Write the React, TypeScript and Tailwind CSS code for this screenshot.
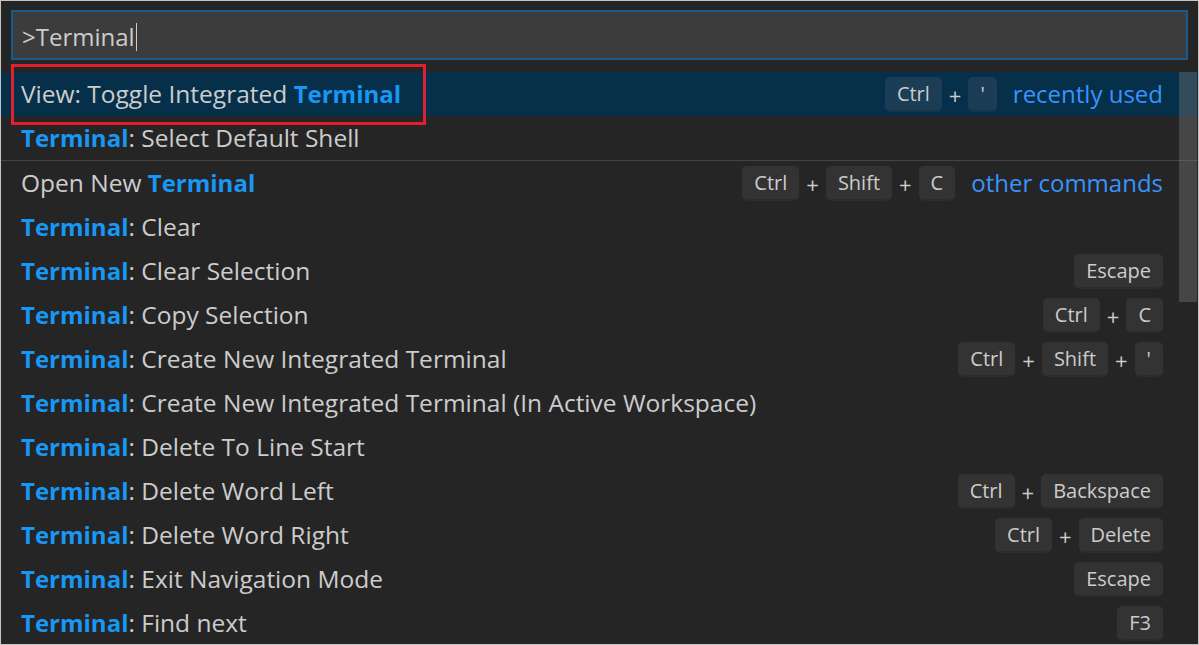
import React from "react";

type Row = {
  pre?: string;
  hl: string;
  post?: string;
  keys?: string[];
  label?: string;
  selected?: boolean;
  sep?: boolean;
};

const rows: Row[] = [
  { pre: "View: Toggle Integrated ", hl: "Terminal", keys: ["Ctrl", "'"], label: "recently used", selected: true },
  { hl: "Terminal", post: ": Select Default Shell" },
  { pre: "Open New ", hl: "Terminal", keys: ["Ctrl", "Shift", "C"], label: "other commands", sep: true },
  { hl: "Terminal", post: ": Clear" },
  { hl: "Terminal", post: ": Clear Selection", keys: ["Escape"] },
  { hl: "Terminal", post: ": Copy Selection", keys: ["Ctrl", "C"] },
  { hl: "Terminal", post: ": Create New Integrated Terminal", keys: ["Ctrl", "Shift", "'"] },
  { hl: "Terminal", post: ": Create New Integrated Terminal (In Active Workspace)" },
  { hl: "Terminal", post: ": Delete To Line Start" },
  { hl: "Terminal", post: ": Delete Word Left", keys: ["Ctrl", "Backspace"] },
  { hl: "Terminal", post: ": Delete Word Right", keys: ["Ctrl", "Delete"] },
  { hl: "Terminal", post: ": Exit Navigation Mode", keys: ["Escape"] },
  { hl: "Terminal", post: ": Find next", keys: ["F3"] },
];

function Keys({ keys, selected }: { keys: string[]; selected?: boolean }) {
  return (
    <div className="flex items-center">
      {keys.map((k, i) => (
        <React.Fragment key={i}>
          {i > 0 && <span className="mx-[7px] pt-[2px] text-[22px] text-[#cccccc]">+</span>}
          <span
            className={
              "flex h-[35px] items-center rounded-[5px] border-b-2 px-[12px] pt-[2px] text-[20px] text-[#cccccc] " +
              (selected ? "bg-[#1b3d55] border-[#1a3448]" : "bg-[#333333] border-[#2c2c2c]")
            }
          >
            {k}
          </span>
        </React.Fragment>
      ))}
    </div>
  );
}

export default function App() {
  return (
    <div
      className="relative h-[645px] w-[1199px] overflow-hidden border border-[#c4c4c4] bg-[#252526]"
      style={{ fontFamily: '"Open Sans", "Noto Sans", sans-serif' }}
    >
      <div className="px-[10px] pt-[9px]">
        <div className="flex h-[50px] items-center border-2 border-[#175a8c] bg-[#3c3c3c] pl-[9px] pt-[3px] text-[24px] text-[#cccccc]">
          <span>&gt;Terminal</span>
          <span className="ml-[1px] h-[28px] w-[1px] bg-[#cccccc]" />
        </div>
      </div>
      <div className="mt-[12px]">
        {rows.map((r, i) => (
          <div
            key={i}
            className={
              "flex h-[44px] items-center justify-between pl-[20px] pr-[35px] text-[24.5px] text-[#cccccc] " +
              (r.selected ? "bg-[#062f4a] " : "") +
              (r.sep ? "h-[45px] border-t border-[#454545]" : "")
            }
          >
            <div className="whitespace-nowrap">
              {r.pre}
              <span className="text-[24px] font-bold text-[#1897f5]">{r.hl}</span>
              {r.post}
            </div>
            <div className="flex items-center">
              {r.keys && <Keys keys={r.keys} selected={r.selected} />}
              {r.label && <span className="ml-[16px] text-[24px] text-[#3794ff]">{r.label}</span>}
            </div>
          </div>
        ))}
      </div>
      <div className="absolute right-[1px] top-[71px] h-[230px] w-[18px] bg-[rgba(121,121,121,0.4)]" />
      <div className="absolute left-[10px] top-[63px] h-[61px] w-[415px] border-[3px] border-[#e0202e]" />
    </div>
  );
}
